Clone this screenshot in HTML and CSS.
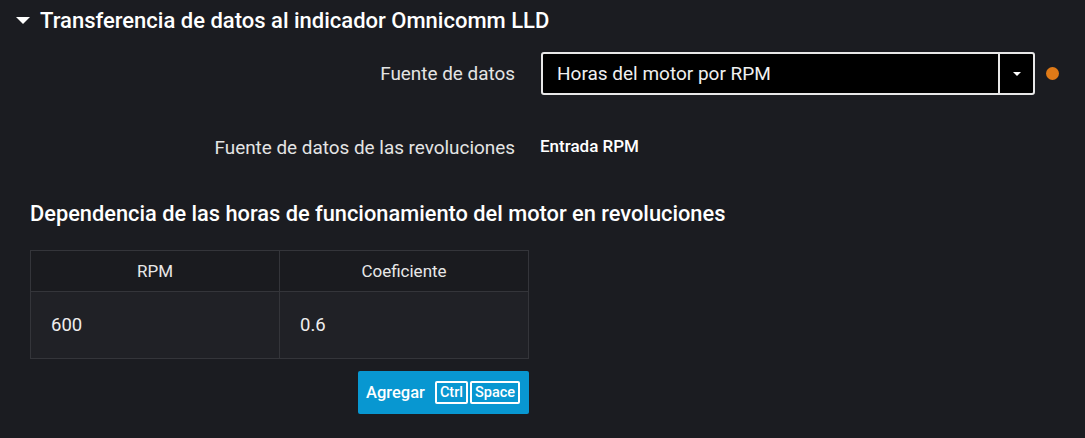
FILE: index.html
```html
<!DOCTYPE html>
<html lang="es">
<head>
    <meta charset="UTF-8">
    <title>Omnicomm LLD</title>
    <link rel="stylesheet" href="styles.css">
</head>
<body>
    <div class="section">
        <h2 class="section-title">
            <span class="arrow"></span>
            Transferencia de datos al indicador Omnicomm LLD
        </h2>

        <div class="field">
            <label class="field-label">Fuente de datos</label>
            <div class="select">
                <span class="select-value">Horas del motor por RPM</span>
                <span class="select-toggle"><span class="caret"></span></span>
            </div>
            <span class="dot"></span>
        </div>

        <div class="field field-static">
            <label class="field-label">Fuente de datos de las revoluciones</label>
            <span class="static-value">Entrada RPM</span>
        </div>

        <div class="table-block">
            <h3 class="table-title">Dependencia de las horas de funcionamiento del motor en revoluciones</h3>
            <table class="grid">
                <thead>
                    <tr>
                        <th>RPM</th>
                        <th>Coeficiente</th>
                    </tr>
                </thead>
                <tbody>
                    <tr>
                        <td>600</td>
                        <td>0.6</td>
                    </tr>
                </tbody>
            </table>
            <div class="actions">
                <button type="button" class="btn-add">
                    Agregar
                    <span class="kbd">Ctrl</span><span class="kbd">Space</span>
                </button>
            </div>
        </div>
    </div>
</body>
</html>
```

FILE: styles.css
```css
body {
    margin: 0;
    background-color: #1b1c21;
    color: #ececec;
    font-family: Roboto, "Noto Sans", sans-serif;
}
.section {
    padding: 5px 0 0 0;
}
.section-title {
    display: flex;
    align-items: center;
    margin: 0;
    padding-left: 16px;
    font-size: 22px;
    font-weight: 500;
    color: #ffffff;
    height: 30px;
}
.arrow {
    width: 0;
    height: 0;
    border-left: 7px solid transparent;
    border-right: 7px solid transparent;
    border-top: 7px solid #ffffff;
    margin-right: 10px;
}
.field {
    display: flex;
    align-items: center;
    margin-top: 17px;
}
.field-label {
    width: 515px;
    text-align: right;
    font-size: 18.9px;
    color: #e4e4e4;
    margin-right: 26px;
}
.select {
    display: flex;
    width: 494px;
    height: 43px;
    box-sizing: border-box;
    border: 2px solid #e8e8e8;
    border-radius: 3px;
    background-color: #000000;
}
.select-value {
    flex: 1;
    display: flex;
    align-items: center;
    padding-left: 14px;
    font-size: 19px;
    color: #f0f0f0;
}
.select-toggle {
    width: 33px;
    border-left: 2px solid #e8e8e8;
    display: flex;
    align-items: center;
    justify-content: center;
}
.caret {
    width: 0;
    height: 0;
    border-left: 4px solid transparent;
    border-right: 4px solid transparent;
    border-top: 4px solid #ffffff;
}
.dot {
    width: 13px;
    height: 13px;
    border-radius: 50%;
    background-color: #e07a17;
    margin-left: 11px;
}
.field-static {
    margin-top: 31px;
    height: 42px;
}
.static-value {
    font-size: 17px;
    font-weight: 500;
    color: #ffffff;
    margin-left: -1px;
    margin-top: -2px;
}
.table-block {
    width: 499px;
    margin-left: 30px;
    margin-top: 34px;
}
.table-title {
    margin: 0 0 24px 0;
    font-size: 21.8px;
    font-weight: 500;
    color: #ffffff;
    white-space: nowrap;
    height: 24px;
    line-height: 24px;
}
.grid {
    width: 499px;
    border-collapse: collapse;
    table-layout: fixed;
}
.grid th,
.grid td {
    border: 1px solid #34353a;
}
.grid th {
    height: 40px;
    padding: 0;
    font-size: 17px;
    font-weight: 400;
    color: #e8e8e8;
    background-color: #1a1b1f;
}
.grid td {
    height: 66px;
    padding: 0 0 0 20px;
    font-size: 18.5px;
    background-color: #202126;
    color: #eeeeee;
}
.actions {
    display: flex;
    justify-content: flex-end;
    margin-top: 12px;
}
.btn-add {
    display: flex;
    align-items: center;
    height: 43px;
    width: 171px;
    padding: 0 0 0 8px;
    border: none;
    border-radius: 2px;
    background-color: #0897d1;
    color: #ffffff;
    font-family: Roboto, sans-serif;
    font-size: 16.5px;
    font-weight: 500;
    cursor: pointer;
}
.kbd {
    display: inline-block;
    border: 2px solid #ffffff;
    border-radius: 2px;
    font-size: 14.5px;
    font-weight: 500;
    padding: 2px 3px;
    line-height: 15px;
    margin-left: 2px;
}
.btn-add .kbd:first-of-type {
    margin-left: 10px;
}
```
